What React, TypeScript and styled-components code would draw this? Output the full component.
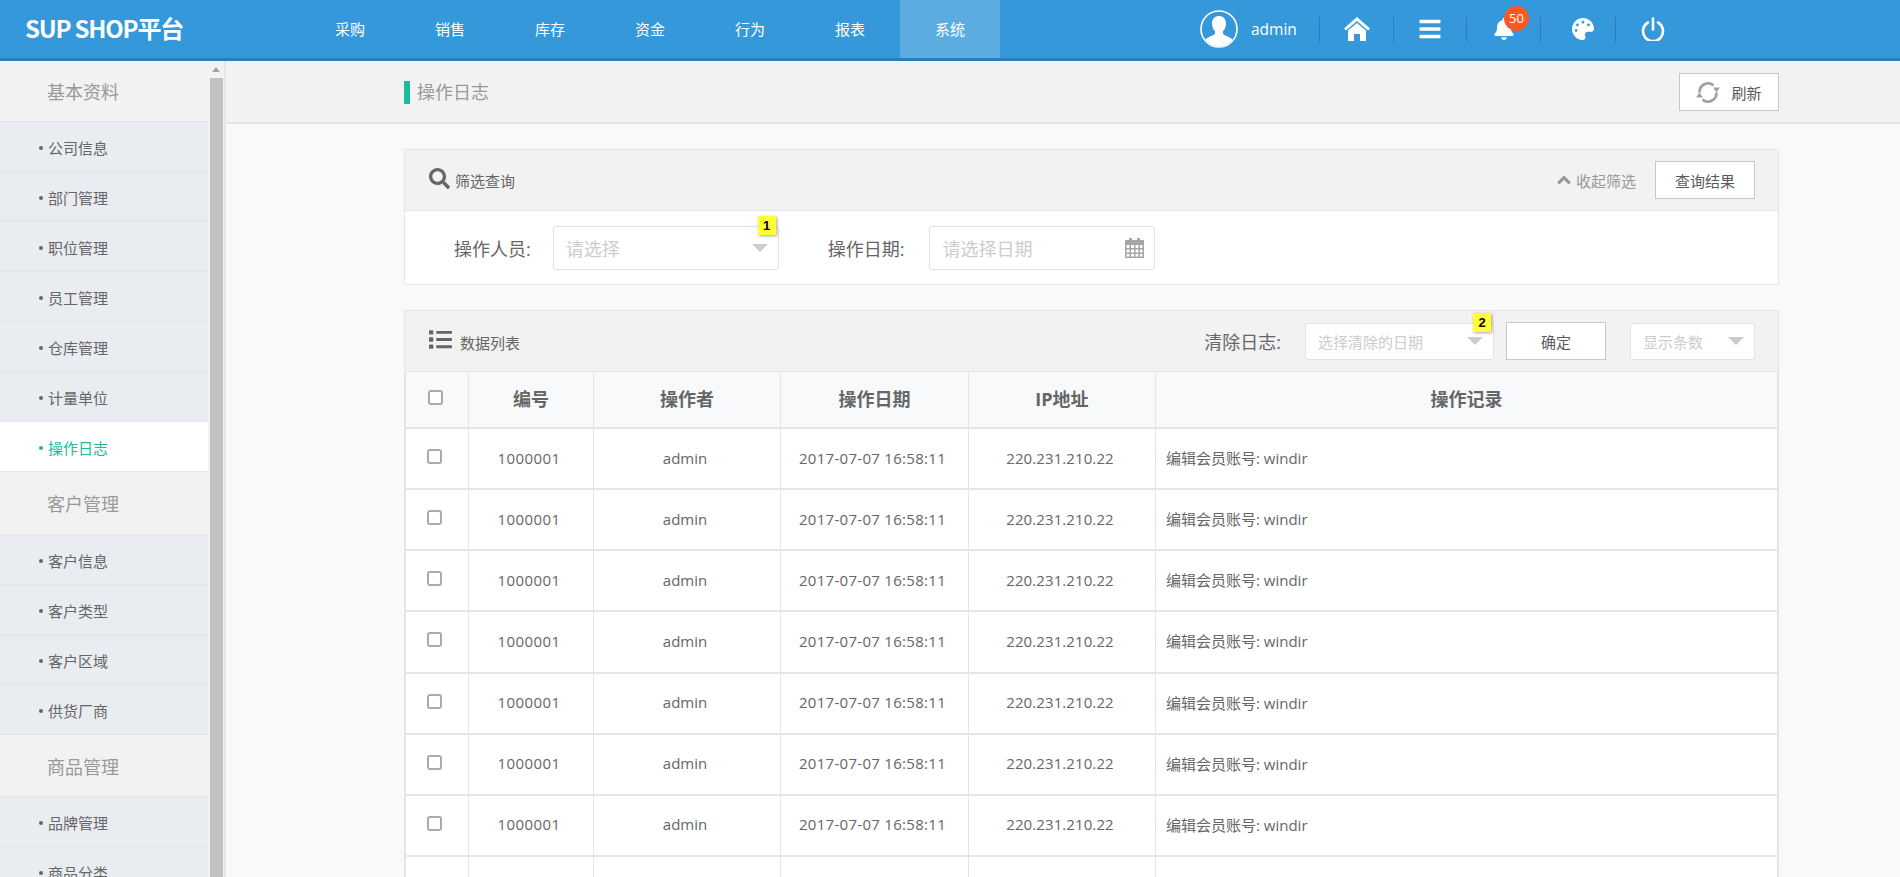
import React from "react"
import styled, {createGlobalStyle} from "styled-components"
import {FaBell, FaPalette, FaSearch, FaList, FaChevronUp, FaBars} from "react-icons/fa"

const GlobalStyle = createGlobalStyle`
  html, body {
    margin: 0;
    height: 100%;
    overflow: hidden;
  }
  body {
    font-family: "Open Sans", "Noto Sans CJK SC", sans-serif;
    color: #666;
    background: #f9f9f9;
  }
  #root {
    height: 100%;
  }
  * {
    box-sizing: border-box;
  }
`

const Page = styled.div`
  display: flex;
  flex-flow: column;
  height: 877px;
  overflow: hidden;
`

const TopBar = styled.header`
  display: flex;
  flex: none;
  height: 61px;
  background: #3498db;
  border-bottom: 3px solid #2a7db5;
  color: #fff;
`

const Logo = styled.div`
  width: 300px;
  padding-left: 25px;
  font: 700 24px/56px "Noto Sans CJK SC", sans-serif;
  letter-spacing: -1.2px;
`

const Nav = styled.nav`
  display: flex;
  width: 900px;
`

const NavItem = styled.a<{$active?: boolean}>`
  width: 100px;
  text-align: center;
  font-size: 15px;
  line-height: 58px;
  background: ${(p) => (p.$active ? "rgba(255, 255, 255, 0.2)" : "transparent")};
`

const UserArea = styled.div`
  display: flex;
  align-items: center;
  width: 119px;
  gap: 13px;
`

const Avatar = styled.svg`
  width: 38px;
  height: 38px;
`

const UserName = styled.span`
  font-size: 15.5px;
`

const ToolCell = styled.div<{$w: number; $shift?: number}>`
  position: relative;
  display: flex;
  align-items: center;
  justify-content: center;
  width: ${(p) => p.$w}px;
  height: 25px;
  padding-left: ${(p) => p.$shift ?? 0}px;
  align-self: center;
  border-left: 1px solid #2a7db5;
  font-size: 22px;
`

const Counter = styled.span`
  position: absolute;
  top: -11px;
  left: 37px;
  width: 25px;
  height: 25px;
  border-radius: 50%;
  background: #ff5722;
  font-size: 13px;
  line-height: 25px;
  text-align: center;
`

const Body = styled.div`
  display: flex;
  flex: 1;
  min-height: 0;
`

const SideBar = styled.aside`
  display: flex;
  flex: none;
  width: 226px;
  background: #f2f2f2;
  border-right: 2px solid #e5e5e5;
`

const SideMenu = styled.div`
  width: 208px;
  margin-right: 2px;
`

const Rail = styled.div`
  display: flex;
  flex-flow: column;
  width: 14px;
`

const RailArrow = styled.div`
  flex: none;
  height: 17px;
  padding: 6px 0 0 2px;

  &::before {
    content: "";
    display: block;
    width: 0;
    border: 4px solid transparent;
    border-top: 0;
    border-bottom: 5px solid #a3a3a3;
  }
`

const RailThumb = styled.div`
  flex: 1;
  width: 13px;
  background: #c1c1c1;
`

const GroupTitle = styled.div<{$h: number}>`
  height: ${(p) => p.$h}px;
  padding-left: 47px;
  border-bottom: 1px solid #e5e5e5;
  font-size: 18px;
  line-height: ${(p) => p.$h + 2}px;
  color: #999;
`

const MenuItem = styled.a<{$active?: boolean}>`
  display: flex;
  align-items: center;
  gap: 5px;
  height: 50px;
  padding: 2px 0 0 39px;
  font-size: 15px;
  color: ${(p) => (p.$active ? "#1abc9c" : "#666")};
  background: ${(p) => (p.$active ? "#fff" : "#e9ecf1")};
  border-bottom: 1px solid #e2e5ea;

  &::before {
    content: "";
    width: 4px;
    height: 4px;
    border-radius: 50%;
    background: ${(p) => (p.$active ? "#1abc9c" : "#666")};
  }
`

const Main = styled.main`
  flex: 1;
  min-width: 0;
`

const TitleBar = styled.div`
  display: flex;
  align-items: center;
  justify-content: space-between;
  height: 63px;
  padding: 1px 121px 0 178px;
  background: #f2f2f2;
  border-bottom: 2px solid #e5e5e5;
`

const PageTitle = styled.h1`
  margin: 0;
  padding-left: 7px;
  border-left: 6px solid #1abc9c;
  font-size: 18px;
  font-weight: 400;
  line-height: 23px;
  color: #999;
`

const Button = styled.button<{$w: number}>`
  display: flex;
  align-items: center;
  justify-content: center;
  gap: 11px;
  width: ${(p) => p.$w}px;
  height: 38px;
  padding: 0;
  background: #fff;
  border: 1px solid #c8c8c8;
  font: 15px "Open Sans", "Noto Sans CJK SC", sans-serif;
  color: #5a5a5a;
`

const Content = styled.div`
  padding: 25px 121px 0 178px;
`

const Panel = styled.section`
  margin-bottom: 25px;
  background: #fff;
  border: 1px solid #e5e5e5;
`

const PanelHead = styled.div`
  display: flex;
  align-items: center;
  height: 61px;
  padding: 0 23px 0 24px;
  background: #f2f2f2;
  border-bottom: 1px solid #e5e5e5;
`

const HeadIcon = styled.span`
  display: flex;
  margin-bottom: 4px;
  color: #666;
`

const PanelName = styled.span<{$gap: number; $drop: number}>`
  margin-left: ${(p) => p.$gap}px;
  padding-top: ${(p) => p.$drop}px;
  font-size: 15px;
`

const Collapse = styled.span`
  display: flex;
  align-items: center;
  gap: 5px;
  margin: 0 19px 0 auto;
  font-size: 15px;
  color: #999;
`

const FilterRow = styled.div`
  display: flex;
  align-items: center;
  gap: 22px;
  height: 73px;
  padding-left: 49px;
`

const FieldLabel = styled.label`
  font-size: 18px;
`

const DateField = styled.div`
  display: flex;
  align-items: center;
  gap: 25px;
  margin-left: 27px;
`

const Picker = styled.div<{$w: number; $h: number; $size: number}>`
  position: relative;
  display: flex;
  align-items: center;
  justify-content: space-between;
  width: ${(p) => p.$w}px;
  height: ${(p) => p.$h}px;
  padding: 0 10px 0 12px;
  background: #fff;
  border: 1px solid #e2e2e2;
  border-radius: 3px;
  font-size: ${(p) => p.$size}px;
  color: #ccc;
`

const Caret = styled.i`
  width: 0;
  border: 8px solid transparent;
  border-bottom: 0;
  border-top: 8px solid #ccc;
`

const StepTag = styled.b`
  position: absolute;
  top: -11px;
  right: 2px;
  width: 18px;
  height: 19px;
  background: #ffff33;
  box-shadow: 1px 1px 3px rgba(0, 0, 0, 0.35);
  font: 700 13px/19px "Liberation Sans", sans-serif;
  color: #000;
  text-align: center;
`

const ListTools = styled.div`
  display: flex;
  align-items: center;
  gap: 24px;
  margin-left: auto;
`

const ToolGroup = styled.div`
  display: flex;
  align-items: center;
  gap: 12px;
`

const Table = styled.table`
  width: 100%;
  table-layout: fixed;
  border-collapse: collapse;
`

const Th = styled.th<{$w?: number}>`
  width: ${(p) => (p.$w ? `${p.$w}px` : "auto")};
  height: 56px;
  padding: 0 0 3px;
  background: #f8f9fb;
  border: 1px solid #e5e5e5;
  border-top: 0;
  border-bottom-width: 2px;
  font-size: 18px;
  font-weight: 700;
`

const Td = styled.td<{$left?: boolean; $track?: number}>`
  height: 61.14px;
  padding: ${(p) => (p.$left ? "0 10px 2px" : "0 4px 2px 0")};
  text-align: ${(p) => (p.$left ? "left" : "center")};
  background: #fff;
  border: 1px solid #e5e5e5;
  border-bottom-width: 2px;
  font-size: 15px;
  letter-spacing: ${(p) => p.$track ?? 0}px;
`

const Check = styled.span<{$x: number}>`
  display: block;
  width: 15px;
  height: 15px;
  margin: 0 auto 2px ${(p) => p.$x}px;
  background: #fff;
  border: 2px solid #aaa;
  border-radius: 3px;
`

const groups = [
  {title: "基本资料", h: 61, items: ["公司信息", "部门管理", "职位管理", "员工管理", "仓库管理", "计量单位", "操作日志"]},
  {title: "客户管理", h: 63, items: ["客户信息", "客户类型", "客户区域", "供货厂商"]},
  {title: "商品管理", h: 62, items: ["品牌管理", "商品分类"]},
]

const navItems = ["采购", "销售", "库存", "资金", "行为", "报表", "系统"]
const rows = [0, 1, 2, 3, 4, 5, 6, 7]

function HomeIcon() {
  return (
    <svg width="26" height="24" viewBox="0 0 26 24" fill="#fff">
      <path d="M13 0 26 11.500 24 13.500 13 4 2 13.500 0 11.500z" />
      <path d="M13 6 22 13.500V24H16V17H10V24H4V13.500z" />
    </svg>
  )
}

function PowerIcon() {
  return (
    <svg width="24" height="24" viewBox="0 0 24 24" fill="none" stroke="#fff" strokeWidth="2.6" strokeLinecap="round">
      <path d="M7 5.500a10 10 0 1 0 10 0" />
      <path d="M12 1.500v11" />
    </svg>
  )
}

function RefreshIcon() {
  return (
    <svg width="24" height="21" viewBox="0 0 24 21" fill="none" stroke="#a0a0a0" strokeWidth="2.600">
      <path d="M3.500 10.500a8.500 9 0 0 1 14-7" />
      <path d="M20.500 10.500a8.500 9 0 0 1-14 7" />
      <path d="M17 5.500h7l-3.500 5z M7 15.500H0l3.500-5z" fill="#a0a0a0" stroke="none" />
    </svg>
  )
}

function CalendarIcon() {
  return (
    <svg width="19" height="20" viewBox="0 0 19 20" fill="#a6a6a6">
      <path d="M4 0h3v4H4zM12 0h3v4h-3z" />
      <path
        fillRule="evenodd"
        d="M0 2h19v18H0zM1.500 7v3h3V7zm4.500 0v3h3V7zm4.500 0v3h3V7zm4.500 0v3h2.500V7zM1.500 11.500v3h3v-3zm4.500 0v3h3v-3zm4.500 0v3h3v-3zm4.500 0v3h2.500v-3zM1.500 16v2.500h3V16zm4.500 0v2.500h3V16zm4.500 0v2.500h3V16zm4.500 0v2.500h2.500V16z"
      />
    </svg>
  )
}

export default function App() {
  return (
    <Page>
      <GlobalStyle />
      <TopBar>
        <Logo>SUP SHOP平台</Logo>
        <Nav>
          {navItems.map((n) => (
            <NavItem key={n} $active={n === "系统"}>
              {n}
            </NavItem>
          ))}
        </Nav>
        <UserArea>
          <Avatar viewBox="0 0 38 38">
            <circle cx="19" cy="19" r="18" fill="none" stroke="#fff" strokeWidth="1.6" />
            <path
              fill="#fff"
              d="M19 6c4.600 0 7 3.400 7 7.600 0 3-1.200 6-3 7.600v2.600c0 1.200 6.800 3 9.800 5.800A17.600 17.600 0 0 1 19 36.400a17.600 17.600 0 0 1-13.800-6.800c3-2.800 9.800-4.600 9.800-5.800v-2.600c-1.800-1.600-3-4.600-3-7.600C12 9.400 14.400 6 19 6z"
            />
          </Avatar>
          <UserName>admin</UserName>
        </UserArea>
        <ToolCell $w={74}>
          <HomeIcon />
        </ToolCell>
        <ToolCell $w={73}>
          <FaBars size={24} />
        </ToolCell>
        <ToolCell $w={74}>
          <FaBell />
          <Counter>50</Counter>
        </ToolCell>
        <ToolCell $w={75} $shift={10}>
          <FaPalette />
        </ToolCell>
        <ToolCell $w={75}>
          <PowerIcon />
        </ToolCell>
      </TopBar>
      <Body>
        <SideBar>
          <SideMenu>
            {groups.map((g) => (
              <div key={g.title}>
                <GroupTitle $h={g.h}>{g.title}</GroupTitle>
                {g.items.map((i) => (
                  <MenuItem key={i} $active={i === "操作日志"}>
                    {i}
                  </MenuItem>
                ))}
              </div>
            ))}
          </SideMenu>
          <Rail>
            <RailArrow />
            <RailThumb />
          </Rail>
        </SideBar>
        <Main>
          <TitleBar>
            <PageTitle>操作日志</PageTitle>
            <Button $w={100}>
              <RefreshIcon />
              刷新
            </Button>
          </TitleBar>
          <Content>
            <Panel>
              <PanelHead>
                <HeadIcon>
                  <FaSearch size={21} />
                </HeadIcon>
                <PanelName $gap={5} $drop={0}>
                  筛选查询
                </PanelName>
                <Collapse>
                  <FaChevronUp size={14} stroke="#999" strokeWidth={40} />
                  收起筛选
                </Collapse>
                <Button $w={100}>查询结果</Button>
              </PanelHead>
              <FilterRow>
                <FieldLabel>操作人员:</FieldLabel>
                <Picker $w={226} $h={44} $size={18}>
                  请选择
                  <Caret />
                  <StepTag>1</StepTag>
                </Picker>
                <DateField>
                  <FieldLabel>操作日期:</FieldLabel>
                  <Picker $w={226} $h={44} $size={18}>
                    请选择日期
                    <CalendarIcon />
                  </Picker>
                </DateField>
              </FilterRow>
            </Panel>
            <Panel>
              <PanelHead>
                <HeadIcon>
                  <FaList size={23} />
                </HeadIcon>
                <PanelName $gap={8} $drop={3}>
                  数据列表
                </PanelName>
                <ListTools>
                  <FieldLabel>清除日志:</FieldLabel>
                  <ToolGroup>
                    <Picker $w={189} $h={37} $size={15}>
                      选择清除的日期
                      <Caret />
                      <StepTag>2</StepTag>
                    </Picker>
                    <Button $w={100}>确定</Button>
                  </ToolGroup>
                  <Picker $w={125} $h={37} $size={15}>
                    显示条数
                    <Caret />
                  </Picker>
                </ListTools>
              </PanelHead>
              <Table>
                <thead>
                  <tr>
                    <Th $w={63}>
                      <Check $x={22} />
                    </Th>
                    <Th $w={125}>编号</Th>
                    <Th $w={187}>操作者</Th>
                    <Th $w={188}>操作日期</Th>
                    <Th $w={187}>IP地址</Th>
                    <Th>操作记录</Th>
                  </tr>
                </thead>
                <tbody>
                  {rows.map((r) => (
                    <tr key={r}>
                      <Td>
                        <Check $x={21} />
                      </Td>
                      <Td $track={0.4}>1000001</Td>
                      <Td>admin</Td>
                      <Td $track={0.3}>2017-07-07 16:58:11</Td>
                      <Td $track={0.1}>220.231.210.22</Td>
                      <Td $left>编辑会员账号: windir</Td>
                    </tr>
                  ))}
                </tbody>
              </Table>
            </Panel>
          </Content>
        </Main>
      </Body>
    </Page>
  )
}
